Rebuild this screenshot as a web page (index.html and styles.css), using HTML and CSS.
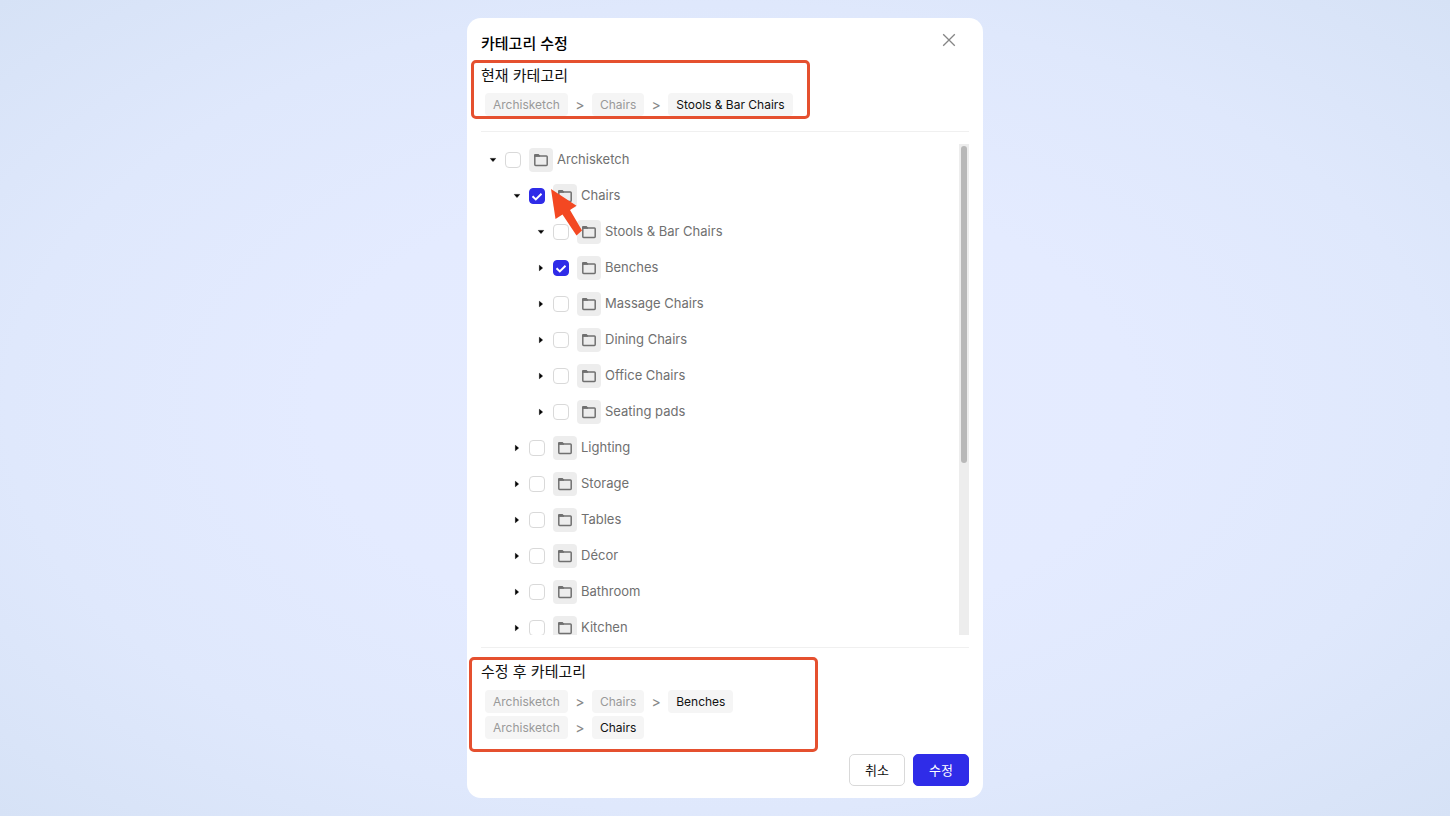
FILE: index.html
```html
<!DOCTYPE html>
<html lang="ko">
<head>
<meta charset="utf-8">
<meta name="viewport" content="width=device-width, initial-scale=1">
<title>카테고리 수정</title>
<link rel="stylesheet" href="styles.css">
</head>
<body>
<svg class="defs" aria-hidden="true">
  <symbol id="folder" viewBox="0 0 24 24">
    <path d="M5.8 7V16.6Q5.8 17.4 6.6 17.4H17.4Q18.2 17.4 18.2 16.6V8.8Q18.2 8 17.4 8H6" fill="none" stroke="#707070" stroke-width="1.5"/>
    <path d="M5 8.7V7Q5 6 6 6H9.6L11 7.4V8.7Z" fill="#707070"/>
  </symbol>
  <symbol id="caret" viewBox="0 0 8 8"><path d="M2.4 1.3L5.6 4L2.4 6.7Z" stroke="#000" stroke-width=".5" stroke-linejoin="round"/></symbol>
</svg>
<main class="dialog" role="dialog" aria-labelledby="dialog-title">
  <header class="header">
    <h1 class="title" id="dialog-title">카테고리 수정</h1>
    <button class="close" type="button" aria-label="닫기"><svg width="14" height="14" viewBox="0 0 14 14"><path d="M1.2 1.2L12.8 12.8M12.8 1.2L1.2 12.8" stroke="#858585" stroke-width="1.3"/></svg></button>
  </header>

  <section class="section current">
    <h2 class="heading">현재 카테고리</h2>
    <div class="crumbs">
      <div class="crumb-row"><span class="chip">Archisketch</span><span class="sep">&gt;</span><span class="chip">Chairs</span><span class="sep">&gt;</span><span class="chip active">Stools &amp; Bar Chairs</span></div>
    </div>
    <div class="highlight highlight-current"></div>
  </section>

  <div class="tree-area">
    <div class="tree-scroll">
      <ul class="tree">
        <li><div class="row"><button class="toggle open" type="button" aria-label="접기"><svg><use href="#caret"/></svg></button><input type="checkbox" id="c1"><label for="c1"><svg class="folder"><use href="#folder"/></svg>Archisketch</label></div>
          <ul>
            <li><div class="row"><button class="toggle open" type="button" aria-label="접기"><svg><use href="#caret"/></svg></button><input type="checkbox" id="c2" checked><label for="c2"><svg class="folder"><use href="#folder"/></svg>Chairs</label><svg class="pointer" viewBox="0 0 32 48"><path d="M0 0L25.5 16.7L19 21L31 41.5L25.5 46.5L11.5 25.5L4.5 30Z" fill="#f34822"/></svg></div>
              <ul>
                <li><div class="row"><button class="toggle open" type="button" aria-label="접기"><svg><use href="#caret"/></svg></button><input type="checkbox" id="c3"><label for="c3"><svg class="folder"><use href="#folder"/></svg>Stools &amp; Bar Chairs</label></div></li>
                <li><div class="row"><button class="toggle" type="button" aria-label="펼치기"><svg><use href="#caret"/></svg></button><input type="checkbox" id="c4" checked><label for="c4"><svg class="folder"><use href="#folder"/></svg>Benches</label></div></li>
                <li><div class="row"><button class="toggle" type="button" aria-label="펼치기"><svg><use href="#caret"/></svg></button><input type="checkbox" id="c5"><label for="c5"><svg class="folder"><use href="#folder"/></svg>Massage Chairs</label></div></li>
                <li><div class="row"><button class="toggle" type="button" aria-label="펼치기"><svg><use href="#caret"/></svg></button><input type="checkbox" id="c6"><label for="c6"><svg class="folder"><use href="#folder"/></svg>Dining Chairs</label></div></li>
                <li><div class="row"><button class="toggle" type="button" aria-label="펼치기"><svg><use href="#caret"/></svg></button><input type="checkbox" id="c7"><label for="c7"><svg class="folder"><use href="#folder"/></svg>Office Chairs</label></div></li>
                <li><div class="row"><button class="toggle" type="button" aria-label="펼치기"><svg><use href="#caret"/></svg></button><input type="checkbox" id="c8"><label for="c8"><svg class="folder"><use href="#folder"/></svg>Seating pads</label></div></li>
              </ul>
            </li>
            <li><div class="row"><button class="toggle" type="button" aria-label="펼치기"><svg><use href="#caret"/></svg></button><input type="checkbox" id="c9"><label for="c9"><svg class="folder"><use href="#folder"/></svg>Lighting</label></div></li>
            <li><div class="row"><button class="toggle" type="button" aria-label="펼치기"><svg><use href="#caret"/></svg></button><input type="checkbox" id="c10"><label for="c10"><svg class="folder"><use href="#folder"/></svg>Storage</label></div></li>
            <li><div class="row"><button class="toggle" type="button" aria-label="펼치기"><svg><use href="#caret"/></svg></button><input type="checkbox" id="c11"><label for="c11"><svg class="folder"><use href="#folder"/></svg>Tables</label></div></li>
            <li><div class="row"><button class="toggle" type="button" aria-label="펼치기"><svg><use href="#caret"/></svg></button><input type="checkbox" id="c12"><label for="c12"><svg class="folder"><use href="#folder"/></svg>Décor</label></div></li>
            <li><div class="row"><button class="toggle" type="button" aria-label="펼치기"><svg><use href="#caret"/></svg></button><input type="checkbox" id="c13"><label for="c13"><svg class="folder"><use href="#folder"/></svg>Bathroom</label></div></li>
            <li><div class="row"><button class="toggle" type="button" aria-label="펼치기"><svg><use href="#caret"/></svg></button><input type="checkbox" id="c14"><label for="c14"><svg class="folder"><use href="#folder"/></svg>Kitchen</label></div></li>
          </ul>
        </li>
      </ul>
    </div>
    <div class="track"><div class="thumb"></div></div>
  </div>

  <section class="section result">
    <h2 class="heading">수정 후 카테고리</h2>
    <div class="crumbs">
      <div class="crumb-row"><span class="chip">Archisketch</span><span class="sep">&gt;</span><span class="chip">Chairs</span><span class="sep">&gt;</span><span class="chip active">Benches</span></div>
      <div class="crumb-row"><span class="chip">Archisketch</span><span class="sep">&gt;</span><span class="chip active">Chairs</span></div>
    </div>
    <div class="highlight highlight-result"></div>
  </section>

  <footer class="actions">
    <button class="btn" type="button">취소</button>
    <button class="btn primary" type="button">수정</button>
  </footer>
</main>
</body>
</html>
```
FILE: styles.css
```css
* { box-sizing: border-box; }

body {
  margin: 0;
  height: 100vh;
  padding: 18px;
  display: flex;
  justify-content: center;
  background: radial-gradient(ellipse farthest-corner at center, #e6ecff 0%, #e4ebff 40%, #dfe8fc 70%, #d6e2f6 100%);
  color: #111;
  font-family: Inter, "Noto Sans CJK KR", sans-serif;
}

h1, h2, ul { margin: 0; padding: 0; }
ul { list-style: none; }
button { font-family: inherit; padding: 0; cursor: pointer; }
.defs { position: absolute; width: 0; height: 0; }

.dialog {
  width: 100%;
  max-width: 516px;
  display: flex;
  flex-direction: column;
  padding: 10px 14px 12px;
  border-radius: 14px;
  background: #fff;
}

.header {
  display: flex;
  justify-content: space-between;
  align-items: flex-start;
  margin-bottom: 8px;
}
.title {
  padding-top: 4px;
  font-size: 15px;
  line-height: 24px;
  font-weight: 500;
  color: #000;
}
.close {
  width: 24px;
  height: 24px;
  margin-right: 8px;
  display: grid;
  place-items: center;
  border: 0;
  background: none;
}

.section { position: relative; }
.current { padding-bottom: 15px; border-bottom: 1px solid #f0f0f0; }
.result { padding: 12px 0 15px; border-top: 1px solid #f0f0f0; }
.heading { font-size: 15px; line-height: 24px; font-weight: 400; }

.crumbs {
  display: flex;
  flex-direction: column;
  gap: 3px;
  padding: 5px 4px 0;
}
.result .crumbs { padding-top: 6px; }
.crumb-row { display: flex; font-size: 12px; line-height: 23px; }
.chip {
  padding: 0 8px;
  border-radius: 4px;
  background: #f5f5f5;
  color: #999;
}
.chip.active { color: #111; }
.sep { width: 24px; text-align: center; font-size: 14px; color: #888; }

.highlight {
  position: absolute;
  border: 3px solid #e5502f;
  border-radius: 5px;
  pointer-events: none;
}
.highlight-current { left: -10px; top: -4px; width: 339px; height: 59px; }
.highlight-result { left: -12px; top: 9px; width: 349px; height: 95px; }

.tree-area {
  flex: 1;
  min-height: 0;
  display: flex;
  margin: 12px 0;
}
.tree-scroll { flex: 1; overflow-y: auto; scrollbar-width: none; }
.tree { padding-top: 4px; }
.tree ul { padding-left: 24px; }
.row {
  position: relative;
  display: flex;
  align-items: center;
  height: 24px;
  margin-bottom: 12px;
}
.row label {
  display: flex;
  gap: 4px;
  font-size: 13px;
  line-height: 23px;
  color: #707070;
}
.toggle {
  width: 24px;
  height: 24px;
  display: grid;
  place-items: center;
  border: 0;
  background: none;
}
.toggle svg { width: 8px; height: 8px; }
.toggle.open svg { transform: rotate(90deg); }
.row input {
  appearance: none;
  width: 16px;
  height: 16px;
  margin: 0 8px 0 0;
  border: 1px solid #d9d9d9;
  border-radius: 4px;
  background: #fff;
}
.row input:checked {
  border-color: #2f2ce8;
  background: #2f2ce8 url("data:image/svg+xml,%3Csvg xmlns='http://www.w3.org/2000/svg' viewBox='0 0 14 14'%3E%3Cpath d='M2.5 7.2L5.8 10.4L11.5 4.8' fill='none' stroke='white' stroke-width='2'/%3E%3C/svg%3E") center / 14px 14px no-repeat;
}
.folder {
  width: 24px;
  height: 24px;
  border-radius: 4px;
  background: #ededed;
}
.pointer {
  position: absolute;
  z-index: 1;
  left: 46px;
  top: 5px;
  width: 32px;
  height: 48px;
  pointer-events: none;
}
.track { width: 10px; padding: 2px; background: #ededed; }
.thumb { height: 65%; border-radius: 3px; background: #b8b8b8; }

.actions { display: flex; justify-content: flex-end; gap: 8px; }
.btn {
  width: 56px;
  height: 32px;
  padding-bottom: 2px;
  border: 1px solid #d9d9d9;
  border-radius: 5px;
  background: #fff;
  color: #111;
  font-size: 13px;
}
.btn.primary { border-color: #2f2ce8; background: #2f2ce8; color: #fff; }
```
